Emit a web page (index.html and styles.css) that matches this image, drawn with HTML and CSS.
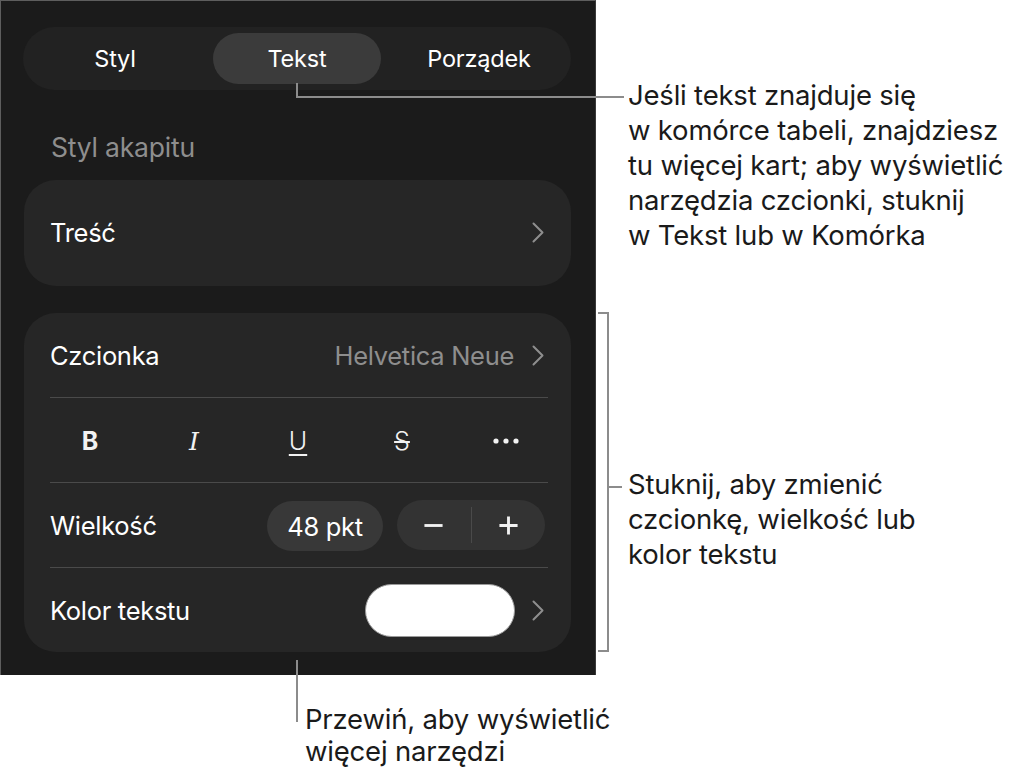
FILE: index.html
```html
<!DOCTYPE html>
<html lang="pl">

<head>
  <meta charset="UTF-8">
  <meta name="viewport" content="width=device-width, initial-scale=1.0">
  <title>Tekst – narzędzia formatowania</title>

  <link rel="stylesheet" href="styles.css">
</head>

<body>

  <div class="figure">

    <div class="panel">
      <div class="segments">
        <div class="seg">Styl</div>
        <div class="seg active">Tekst</div>
        <div class="seg">Porządek</div>
      </div>

      <div class="section-title">Styl akapitu</div>

      <div class="card card-single">
        <div class="row">
          <span class="label">Treść</span>
          <svg class="chevron" viewBox="0 0 12 21"><path d="M1.5 1.5 L10.5 10.5 L1.5 19.5"/></svg>
        </div>
      </div>

      <div class="card">
        <div class="row">
          <span class="label">Czcionka</span>
          <span class="value">Helvetica Neue</span>
          <svg class="chevron" viewBox="0 0 12 21"><path d="M1.5 1.5 L10.5 10.5 L1.5 19.5"/></svg>
        </div>

        <div class="row">
          <div class="format">
            <span class="fmt fmt-bold">B</span>
            <span class="fmt fmt-italic">I</span>
            <span class="fmt fmt-under">U</span>
            <span class="fmt fmt-strike">S</span>
            <span class="fmt">
              <svg class="dots" viewBox="0 0 26 6"><circle cx="3" cy="3" r="2.6"/><circle cx="13" cy="3" r="2.6"/><circle cx="23" cy="3" r="2.6"/></svg>
            </span>
          </div>
        </div>

        <div class="row">
          <span class="label">Wielkość</span>
          <span class="size-pill">48 pkt</span>
          <div class="stepper">
            <span class="step">
              <svg viewBox="0 0 22 22"><path d="M1.5 11 H20.5"/></svg>
            </span>
            <span class="step-sep"></span>
            <span class="step">
              <svg viewBox="0 0 22 22"><path d="M1.5 11 H20.5 M11 1.5 V20.5"/></svg>
            </span>
          </div>
        </div>

        <div class="row">
          <span class="label">Kolor tekstu</span>
          <span class="swatch"></span>
          <svg class="chevron" viewBox="0 0 12 21"><path d="M1.5 1.5 L10.5 10.5 L1.5 19.5"/></svg>
        </div>
      </div>
    </div>

    <!-- callouts -->
    <div class="leader leader-tabs"></div>
    <p class="note note-tabs">Jeśli tekst znajduje się<br>w komórce tabeli, znajdziesz<br>tu więcej kart; aby wyświetlić<br>narzędzia czcionki, stuknij<br>w Tekst lub w Komórka</p>

    <div class="bracket"></div>
    <div class="bracket-tick"></div>
    <p class="note note-font">Stuknij, aby zmienić<br>czcionkę, wielkość lub<br>kolor tekstu</p>

    <div class="leader leader-scroll"></div>
    <p class="note note-scroll">Przewiń, aby wyświetlić<br>więcej narzędzi</p>

  </div>

</body>

</html>
```

FILE: styles.css
```css
body {
  margin: 0;
  background-color: #fff;
  font-family: Inter, "Noto Sans", sans-serif;
}

.figure {
  position: relative;
  width: 1035px;
  height: 771px;
}

/* dark inspector panel */
.panel {
  box-sizing: border-box;
  width: 596px;
  height: 675px;
  padding: 0 24px 0 22px;
  background-color: #1b1b1b;
  border: 1px solid #5e5e5e;
  border-right-color: #3a3a3a;
  border-bottom: none;
  color: #fff;
  overflow: hidden;
}

.segments {
  display: grid;
  grid-template-columns: repeat(3, 1fr);
  gap: 10px;
  height: 63px;
  margin-top: 26px;
  padding: 6px;
  box-sizing: border-box;
  background-color: #222;
  border-radius: 32px;
}

.seg {
  display: flex;
  align-items: center;
  justify-content: center;
  border-radius: 26px;
  font-size: 23.5px;
  letter-spacing: -0.2px;
}

.seg.active {
  background-color: #3b3b3b;
  margin: 0 2px;
}

.section-title {
  margin: 41px 0 0 28px;
  height: 32px;
  line-height: 32px;
  font-size: 26.5px;
  color: #8e8e8e;
  letter-spacing: -0.2px;
}

.card {
  margin-top: 17px;
  background-color: #262626;
  border-radius: 32px;
  margin-left: 1px;
}

.card + .card {
  margin-top: 27px;
}

.card-single {
  height: 106px;
  display: flex;
  align-items: center;
}

.card-single .row {
  flex: 1;
  margin-top: -2px;
}

.row {
  display: flex;
  align-items: center;
  height: 84px;
  margin: 0 23px 0 26px;
}

.card .row + .row {
  border-top: 1px solid #4a4a4a;
}

.label {
  flex: 1;
  font-size: 25.5px;
  letter-spacing: -0.3px;
}

.value {
  font-size: 25.5px;
  color: #8e8e8e;
  letter-spacing: -0.3px;
  margin-right: 18px;
}

.chevron {
  width: 12px;
  height: 21px;
  margin-right: 4px;
  fill: none;
  stroke: #8e8e8e;
  stroke-width: 2;
  stroke-linecap: round;
  stroke-linejoin: round;
}

/* B I U S ... */
.format {
  flex: 1;
  display: grid;
  grid-template-columns: repeat(5, 1fr);
  margin: 2px -10px 0 -12px;
}

.fmt {
  display: flex;
  justify-content: center;
  align-items: center;
  height: 30px;
  font-size: 25px;
  color: #f2f2f2;
}

.fmt-bold {
  font-weight: 700;
}

.fmt-italic {
  font-family: "DejaVu Serif", serif;
  font-style: italic;
  font-size: 25px;
}

.fmt-under {
  text-decoration: underline;
  text-decoration-thickness: 2px;
  text-underline-offset: 4px;
  font-weight: 300;
}

.fmt-strike {
  text-decoration: line-through;
  text-decoration-thickness: 2px;
  font-weight: 300;
}

.dots {
  width: 26px;
  height: 6px;
  fill: #f2f2f2;
}

.size-pill {
  display: flex;
  align-items: center;
  justify-content: center;
  width: 116px;
  height: 50px;
  border-radius: 25px;
  background-color: #383838;
  font-size: 25.5px;
  letter-spacing: -0.3px;
  margin-top: 2px;
}

.stepper {
  display: flex;
  align-items: center;
  width: 148px;
  height: 50px;
  margin-left: 14px;
  margin-right: 3px;
  border-radius: 25px;
  background-color: #333;
}

.step {
  flex: 1;
  display: flex;
  justify-content: center;
}

.step svg {
  width: 21px;
  height: 21px;
  fill: none;
  stroke: #f2f2f2;
  stroke-width: 3;
}

.step-sep {
  width: 1px;
  height: 36px;
  background-color: #4a4a4a;
}

.swatch {
  width: 150px;
  height: 53px;
  border-radius: 27px;
  background-color: #fff;
  border: 1px solid #9a9a9a;
  box-sizing: border-box;
  margin-right: 17px;
}

/* annotations */
.leader,
.bracket,
.bracket-tick {
  position: absolute;
  border-color: #8c8c8c;
  border-style: solid;
  border-width: 0;
}

.leader-tabs {
  left: 296px;
  top: 83px;
  width: 326px;
  height: 13px;
  border-left-width: 2px;
  border-bottom-width: 2px;
}

.leader-scroll {
  left: 296px;
  top: 660px;
  height: 62px;
  border-left-width: 2px;
}

.bracket {
  left: 598px;
  top: 312px;
  width: 9px;
  height: 336px;
  border-width: 2px 2px 2px 0;
}

.bracket-tick {
  left: 609px;
  top: 486px;
  width: 13px;
  border-top-width: 2px;
}

.note {
  position: absolute;
  margin: 0;
  font-size: 27.5px;
  line-height: 35px;
  color: #1a1a1a;
  letter-spacing: -0.2px;
}

.note-tabs {
  left: 628px;
  top: 78px;
}

.note-font {
  left: 628px;
  top: 467px;
}

.note-scroll {
  left: 305px;
  top: 703px;
  line-height: 32px;
}
```
